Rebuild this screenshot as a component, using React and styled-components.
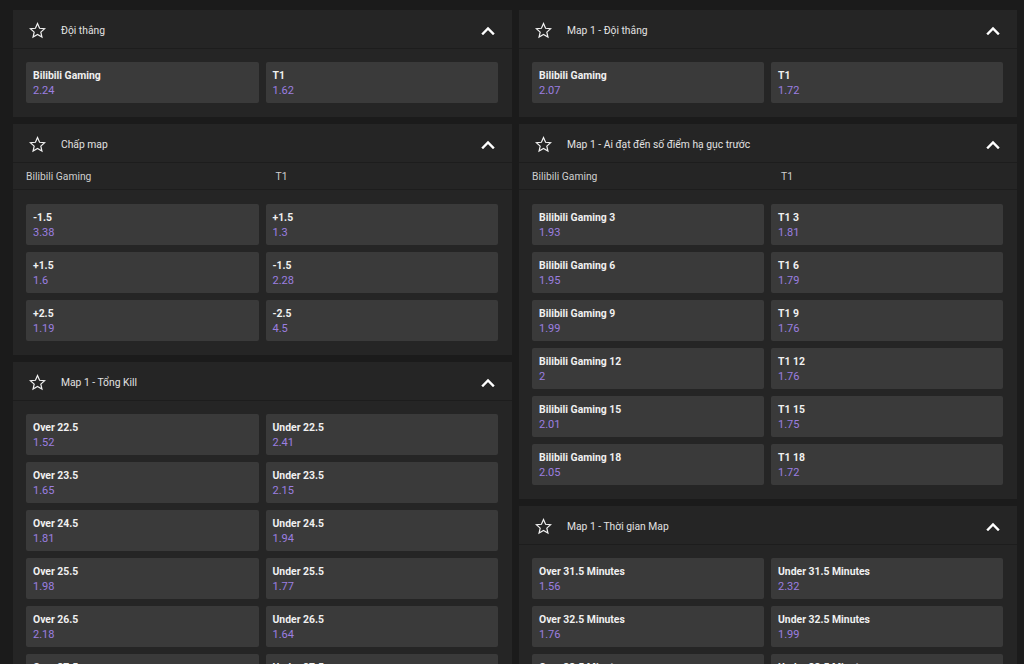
import React from "react";
import styled, { createGlobalStyle } from "styled-components";

const Global = createGlobalStyle`
  html, body { margin: 0; padding: 0; background: #1b1b1b; overflow: hidden; }
  body { font-family: Roboto, "Noto Sans", "Liberation Sans", sans-serif; }
  * { box-sizing: border-box; }
`;

const Page = styled.div`
  display: grid;
  grid-template-columns: 499px 498px;
  column-gap: 7px;
  padding: 10px 7px 0 13px;
  align-items: start;
  height: 664px;
  overflow: hidden;
`;

const Column = styled.div`
  display: flex;
  flex-direction: column;
  gap: 7px;
`;

const Card = styled.section`
  background: #252525;
`;

const Header = styled.div`
  height: 39px;
  display: flex;
  align-items: center;
  padding: 2px 17px 0 16px;
  border-bottom: 1px solid #1d1d1d;
`;

const Title = styled.span`
  flex: 1;
  margin-left: 15px;
  font-size: 10.3px;
  color: #e2e2e2;
`;

const SubRow = styled.div`
  display: grid;
  grid-template-columns: 1fr 1fr;
  column-gap: 7px;
  height: 27px;
  align-items: center;
  padding: 1px 14px 0 13px;
  border-bottom: 1px solid #1d1d1d;
  font-size: 10.3px;
  color: #cfcfcf;
`;

const SubLabel = styled.span`
  padding-left: ${(p) => (p.$second ? "10px" : "0")};
`;

const Body = styled.div`
  display: grid;
  grid-template-columns: 1fr 1fr;
  gap: 7px;
  padding: ${(p) => (p.$sub ? "14px" : "13px")} 14px 14px 13px;
`;

const Outcome = styled.div`
  height: 41px;
  background: #3a3a3a;
  border-radius: 2px;
  padding: 6px 7px 0;
  display: flex;
  flex-direction: column;
  overflow: hidden;
`;

const Label = styled.span`
  font-size: 10.4px;
  font-weight: 700;
  color: #f0f0f0;
  line-height: 15px;
`;

const Odds = styled.span`
  font-size: 11px;
  color: #9c7fe0;
  line-height: 16px;
`;

const Star = () => (
  <svg width="17" height="17" viewBox="0 0 24 24" fill="none" stroke="#f2f2f2" strokeWidth="1.7" strokeLinejoin="miter">
    <path d="M12 2.2l2.95 6.6 7.15.7-5.4 4.8 1.55 7.05L12 17.7l-6.25 3.65L7.3 14.3 1.9 9.5l7.15-.7z" />
  </svg>
);

const Chevron = () => (
  <svg width="14" height="9" viewBox="0 0 14 9" fill="none" stroke="#ffffff" strokeWidth="2.4" strokeLinecap="square">
    <polyline points="2,7.5 7,2.5 12,7.5" />
  </svg>
);

const Market = ({ title, sub, rows }) => (
  <Card>
    <Header>
      <Star />
      <Title>{title}</Title>
      <Chevron />
    </Header>
    {sub && (
      <SubRow>
        <SubLabel>{sub[0]}</SubLabel>
        <SubLabel $second>{sub[1]}</SubLabel>
      </SubRow>
    )}
    <Body $sub={!!sub}>
      {rows.flat().map(([l, o], i) => (
        <Outcome key={i}>
          <Label>{l}</Label>
          <Odds>{o}</Odds>
        </Outcome>
      ))}
    </Body>
  </Card>
);

const left = [
  { title: "Đội thắng", rows: [[["Bilibili Gaming", "2.24"], ["T1", "1.62"]]] },
  {
    title: "Chấp map",
    sub: ["Bilibili Gaming", "T1"],
    rows: [
      [["-1.5", "3.38"], ["+1.5", "1.3"]],
      [["+1.5", "1.6"], ["-1.5", "2.28"]],
      [["+2.5", "1.19"], ["-2.5", "4.5"]],
    ],
  },
  {
    title: "Map 1 - Tổng Kill",
    rows: [
      [["Over 22.5", "1.52"], ["Under 22.5", "2.41"]],
      [["Over 23.5", "1.65"], ["Under 23.5", "2.15"]],
      [["Over 24.5", "1.81"], ["Under 24.5", "1.94"]],
      [["Over 25.5", "1.98"], ["Under 25.5", "1.77"]],
      [["Over 26.5", "2.18"], ["Under 26.5", "1.64"]],
      [["Over 27.5", "2.41"], ["Under 27.5", "1.52"]],
      [["Over 28.5", "2.65"], ["Under 28.5", "1.44"]],
    ],
  },
];

const right = [
  { title: "Map 1 - Đội thắng", rows: [[["Bilibili Gaming", "2.07"], ["T1", "1.72"]]] },
  {
    title: "Map 1 - Ai đạt đến số điểm hạ gục trước",
    sub: ["Bilibili Gaming", "T1"],
    rows: [
      [["Bilibili Gaming 3", "1.93"], ["T1 3", "1.81"]],
      [["Bilibili Gaming 6", "1.95"], ["T1 6", "1.79"]],
      [["Bilibili Gaming 9", "1.99"], ["T1 9", "1.76"]],
      [["Bilibili Gaming 12", "2"], ["T1 12", "1.76"]],
      [["Bilibili Gaming 15", "2.01"], ["T1 15", "1.75"]],
      [["Bilibili Gaming 18", "2.05"], ["T1 18", "1.72"]],
    ],
  },
  {
    title: "Map 1 - Thời gian Map",
    rows: [
      [["Over 31.5 Minutes", "1.56"], ["Under 31.5 Minutes", "2.32"]],
      [["Over 32.5 Minutes", "1.76"], ["Under 32.5 Minutes", "1.99"]],
      [["Over 33.5 Minutes", "1.98"], ["Under 33.5 Minutes", "1.77"]],
    ],
  },
];

export default function App() {
  return (
    <>
      <Global />
      <Page>
        <Column>
          {left.map((m, i) => (
            <Market key={i} {...m} />
          ))}
        </Column>
        <Column>
          {right.map((m, i) => (
            <Market key={i} {...m} />
          ))}
        </Column>
      </Page>
    </>
  );
}
